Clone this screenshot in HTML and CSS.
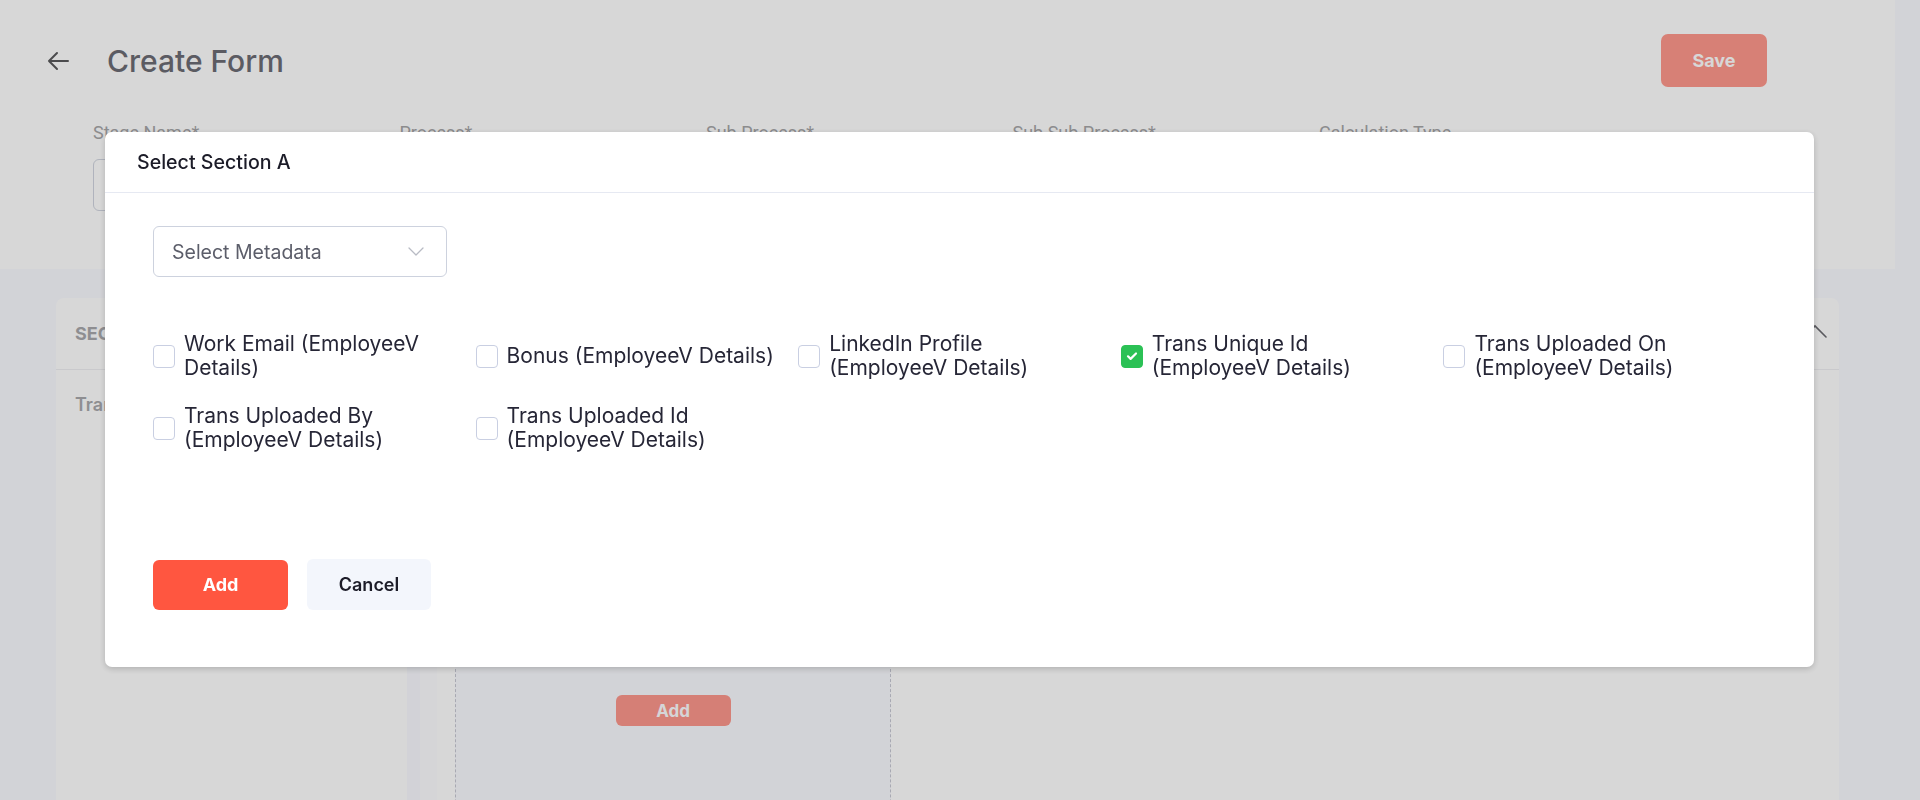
FILE: index.html
```html
<!DOCTYPE html>
<html lang="en">
<head>
<meta charset="utf-8">
<title>Create Form</title>
<link rel="stylesheet" href="styles.css">
</head>
<body>
<div class="page">
  <header class="topbar">
    <div class="title-row">
      <button class="back" aria-label="Back">
        <svg width="24" height="24" viewBox="0 0 24 24" fill="none" stroke="currentColor" stroke-width="2" stroke-linecap="round" stroke-linejoin="round"><path d="M22 12H3M11 4l-8 8 8 8"/></svg>
      </button>
      <h1 class="title">Create Form</h1>
      <button class="save">Save</button>
    </div>
    <div class="fields">
      <div class="field"><label>Stage Name*</label><div class="input"></div></div>
      <div class="field"><label>Process*</label><div class="input"></div></div>
      <div class="field"><label>Sub Process*</label><div class="input"></div></div>
      <div class="field"><label>Sub Sub Process*</label><div class="input"></div></div>
      <div class="field"><label>Calculation Type</label><div class="input"></div></div>
    </div>
  </header>
  <main class="content">
    <section class="card">
      <div class="card-head">
        <span class="card-title">SECTION A</span>
        <svg class="chev-up" width="24" height="14" viewBox="0 0 24 14" fill="none" stroke="currentColor" stroke-width="1.6" stroke-linecap="round"><path d="M1 13L12 2l11 11"/></svg>
      </div>
      <div class="card-body">
        <aside class="side"><div class="side-item">Trans Unique Id</div></aside>
        <div class="track"></div>
        <div class="main">
          <div class="dropzone"><button class="add-sm">Add</button></div>
        </div>
      </div>
    </section>
  </main>
</div>

<div class="overlay"></div>

<div class="modal">
  <div class="modal-head">Select Section A</div>
  <div class="modal-body">
    <div class="select">
      <span class="placeholder">Select Metadata</span>
      <svg width="16" height="9" viewBox="0 0 16 9" fill="none" stroke="currentColor" stroke-width="1.3" stroke-linecap="round" stroke-linejoin="round"><path d="M1 1l7 7 7-7"/></svg>
    </div>
    <div class="options">
      <label class="opt"><span class="box"></span><span class="txt">Work Email (EmployeeV Details)</span></label>
      <label class="opt"><span class="box"></span><span class="txt">Bonus (EmployeeV Details)</span></label>
      <label class="opt"><span class="box"></span><span class="txt">LinkedIn Profile (EmployeeV Details)</span></label>
      <label class="opt"><span class="box checked"><svg width="14" height="14" viewBox="0 0 14 14" fill="none" stroke="#fff" stroke-width="2.2" stroke-linecap="round" stroke-linejoin="round"><path d="M3 7.3l2.6 2.6L11 4.5"/></svg></span><span class="txt">Trans Unique Id (EmployeeV Details)</span></label>
      <label class="opt"><span class="box"></span><span class="txt">Trans Uploaded On (EmployeeV Details)</span></label>
      <label class="opt"><span class="box"></span><span class="txt">Trans Uploaded By (EmployeeV Details)</span></label>
      <label class="opt"><span class="box"></span><span class="txt">Trans Uploaded Id (EmployeeV Details)</span></label>
    </div>
    <div class="actions">
      <button class="btn-add">Add</button>
      <button class="btn-cancel">Cancel</button>
    </div>
  </div>
</div>
</body>
</html>
```

FILE: styles.css
```css
* { box-sizing: border-box; }
html, body { margin: 0; padding: 0; }
body {
  background: #fafbff;
  font-family: Inter, "Noto Sans", sans-serif;
  width: 1920px;
  height: 800px;
  overflow: hidden;
}
button { font-family: inherit; cursor: pointer; }

.page { width: 1895px; }

.topbar {
  background: #ffffff;
  height: 269px;
  padding-top: 34px;
}
.title-row {
  display: flex;
  align-items: center;
  height: 53px;
  padding-left: 46px;
  padding-right: 128px;
}
.back {
  border: 0;
  background: none;
  padding: 0;
  color: #5a5a5c;
  width: 24px;
  height: 24px;
  display: flex;
}
.title {
  margin: 0 0 0 37px;
  font-size: 30px;
  font-weight: 500;
  color: #6c6c75;
  flex: 1;
}
.save {
  width: 106px;
  height: 53px;
  border: 0;
  border-radius: 7px;
  background: #ff5540;
  opacity: 0.6;
  color: #fff;
  font-size: 18px;
  font-weight: 700;
}
.fields {
  display: grid;
  grid-template-columns: repeat(5, 280px);
  column-gap: 26.5px;
  padding-left: 93px;
  margin-top: 35px;
}
.field label {
  display: block;
  font-family: Roboto, Inter, sans-serif;
  font-size: 18px;
  line-height: 22px;
  color: #a6a6a8;
  margin-bottom: 15px;
}
.input {
  height: 52px;
  border: 1px solid #d1d5e0;
  border-radius: 6px;
  background: #fff;
}

.content { padding: 29px 56px 0; }
.card {
  background: #ffffff;
  border-radius: 8px;
  display: flex;
  flex-direction: column;
}
.card-head {
  flex: none;
  height: 72px;
  border-bottom: 1px solid #efeff2;
  display: flex;
  align-items: center;
  justify-content: space-between;
  padding: 0 12px 0 19px;
}
.card-title {
  font-size: 18px;
  font-weight: 700;
  color: #a9a9ad;
}
.chev-up { color: #6a6a70; margin-top: -6px; }
.card-body { display: flex; }
.side { width: 351px; padding: 24px 19px; }
.side-item { font-size: 18px; font-weight: 600; color: #a9a9ad; }
.track { width: 30px; background: linear-gradient(to right, #f9faff 0 13px, #fdfdff 13px 30px); }
.main { flex: 1; padding: 18px; }
.dropzone {
  width: 436px;
  height: 560px;
  border-left: 1px dashed #c8c9d4;
  border-right: 1px dashed #c8c9d4;
  border-top: 1px dashed #c8c9d4;
  background: #fafbff;
  display: flex;
  justify-content: center;
  align-items: flex-start;
  padding-top: 306px;
}
.add-sm {
  width: 115px;
  height: 31px;
  border: 0;
  border-radius: 6px;
  background: #ff5540;
  opacity: 0.6;
  color: #fff;
  font-size: 17px;
  font-weight: 700;
}

.overlay {
  position: fixed;
  inset: 0;
  background: rgba(0, 0, 0, 0.157);
}

.modal {
  position: fixed;
  left: 105px;
  top: 132px;
  width: 1709px;
  height: 535px;
  background: #ffffff;
  border-radius: 7px;
  box-shadow: 0 2px 6px rgba(0, 0, 0, 0.18);
}
.modal-head {
  height: 61px;
  border-bottom: 1px solid #e6e9f2;
  padding-left: 32px;
  display: flex;
  align-items: center;
  font-size: 19.6px;
  font-weight: 500;
  color: #1c1c28;
}
.modal-body { padding: 33px 48px 0; }
.select {
  width: 294px;
  height: 51px;
  border: 1px solid #cdd2de;
  border-radius: 6px;
  display: flex;
  align-items: center;
  justify-content: space-between;
  padding: 0 22px 0 18px;
  color: #b8bbc4;
}
.placeholder { font-size: 19.5px; color: #5c5e6a; }
.options {
  margin-top: 55px;
  display: grid;
  grid-template-columns: repeat(5, 1fr);
  row-gap: 24px;
}
.opt {
  display: flex;
  align-items: center;
  gap: 9px;
  min-height: 48px;
}
.box {
  flex: none;
  width: 22px;
  height: 23px;
  border: 1.5px solid #c9cfe2;
  border-radius: 4px;
  background: #fff;
  display: flex;
  align-items: center;
  justify-content: center;
}
.box.checked { background: #2bc155; border-color: #2bc155; }
.txt {
  font-size: 21px;
  line-height: 24px;
  color: #262636;
  max-width: 272px;
}
.actions {
  margin-top: 107px;
  display: flex;
  gap: 19px;
  align-items: center;
}
.btn-add {
  width: 135px;
  height: 50px;
  border: 0;
  border-radius: 6px;
  background: #ff5640;
  color: #fff;
  font-size: 18px;
  font-weight: 700;
}
.btn-cancel {
  width: 124px;
  height: 51px;
  border: 0;
  border-radius: 6px;
  background: #f3f6fc;
  color: #1c1c28;
  font-size: 18px;
  font-weight: 600;
}
```
